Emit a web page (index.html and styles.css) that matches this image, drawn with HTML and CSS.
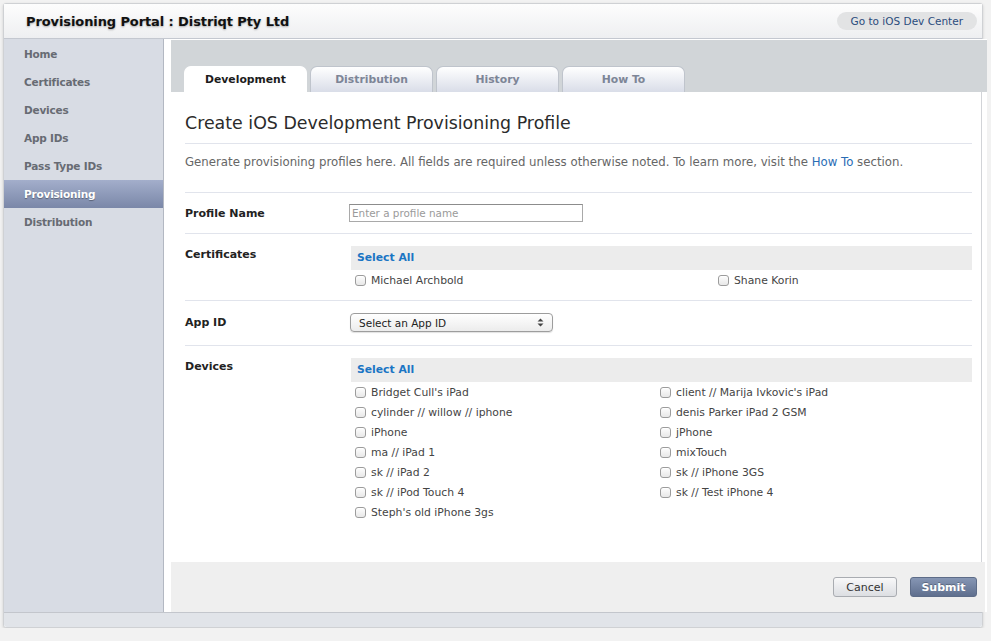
FILE: index.html
```html
<!DOCTYPE html>
<html>
<head>
<meta charset="utf-8">
<title>Provisioning Portal</title>
<link rel="stylesheet" href="styles.css">
</head>
<body>
<div class="frame">
  <header class="topbar">
    <h1 class="title">Provisioning Portal : Distriqt Pty Ltd</h1>
    <a class="devcenter" href="#">Go to iOS Dev Center</a>
  </header>
  <div class="body">
    <nav class="sidebar">
      <a class="nav-item" href="#">Home</a>
      <a class="nav-item" href="#">Certificates</a>
      <a class="nav-item" href="#">Devices</a>
      <a class="nav-item" href="#">App IDs</a>
      <a class="nav-item" href="#">Pass Type IDs</a>
      <a class="nav-item active" href="#">Provisioning</a>
      <a class="nav-item" href="#">Distribution</a>
    </nav>
    <main class="main">
      <div class="tabband">
        <a class="tab active" href="#">Development</a>
        <a class="tab" href="#">Distribution</a>
        <a class="tab" href="#">History</a>
        <a class="tab" href="#">How To</a>
      </div>
      <section class="content">
        <h2 class="heading">Create iOS Development Provisioning Profile</h2>
        <p class="intro">Generate provisioning profiles here. All fields are required unless otherwise noted. To learn more, visit the <a href="#" class="link">How To</a> section.</p>

        <div class="row row-name">
          <div class="label">Profile Name</div>
          <div class="field"><input class="text-input" type="text" placeholder="Enter a profile name"></div>
        </div>

        <div class="row row-certs">
          <div class="label">Certificates</div>
          <div class="field">
            <div class="selectall">Select All</div>
            <div class="checks certs">
              <label class="check"><span class="cb"></span>Michael Archbold</label>
              <label class="check"><span class="cb"></span>Shane Korin</label>
            </div>
          </div>
        </div>

        <div class="row row-app">
          <div class="label">App ID</div>
          <div class="field">
            <div class="select">
              <span>Select an App ID</span>
              <svg class="updown" width="7" height="9" viewBox="0 0 7 9"><path d="M3.5 0.5 L6.5 3.5 H0.5 Z M3.5 8.5 L6.5 5.5 H0.5 Z" fill="#444"/></svg>
            </div>
          </div>
        </div>

        <div class="row row-devices">
          <div class="label">Devices</div>
          <div class="field">
            <div class="selectall">Select All</div>
            <div class="checks devices">
              <label class="check"><span class="cb"></span>Bridget Cull's iPad</label>
              <label class="check"><span class="cb"></span>client // Marija Ivkovic's iPad</label>
              <label class="check"><span class="cb"></span>cylinder // willow // iphone</label>
              <label class="check"><span class="cb"></span>denis Parker iPad 2 GSM</label>
              <label class="check"><span class="cb"></span>iPhone</label>
              <label class="check"><span class="cb"></span>jPhone</label>
              <label class="check"><span class="cb"></span>ma // iPad 1</label>
              <label class="check"><span class="cb"></span>mixTouch</label>
              <label class="check"><span class="cb"></span>sk // iPad 2</label>
              <label class="check"><span class="cb"></span>sk // iPhone 3GS</label>
              <label class="check"><span class="cb"></span>sk // iPod Touch 4</label>
              <label class="check"><span class="cb"></span>sk // Test iPhone 4</label>
              <label class="check"><span class="cb"></span>Steph's old iPhone 3gs</label>
            </div>
          </div>
        </div>
      </section>
      <footer class="actions">
        <button class="btn cancel" type="button">Cancel</button>
        <button class="btn submit" type="button">Submit</button>
      </footer>
    </main>
  </div>
  <div class="bottombar"></div>
</div>
</body>
</html>
```

FILE: styles.css
```css
* { box-sizing: border-box; }

html, body {
  margin: 0;
  padding: 0;
  background: #f2f2f2;
  font-family: "DejaVu Sans", "Liberation Sans", sans-serif;
  font-size: 12px;
  color: #333;
}

.frame {
  margin: 3px 0 0 3px;
  width: 980px;
  border: 1px solid #cfd1d4;
  border-radius: 3px;
  box-shadow: 0 1px 3px rgba(0,0,0,0.15);
  background: #fff;
}

.topbar {
  height: 35px;
  display: flex;
  align-items: center;
  justify-content: space-between;
  padding: 0 5px 0 22px;
  background: linear-gradient(#fdfdfd, #eeeff1);
  border-bottom: 1px solid #c4c8d0;
}

.title {
  margin: 0;
  font-size: 13px;
  font-weight: bold;
  color: #111;
  letter-spacing: -0.1px;
  text-shadow: 0 1px 2px rgba(0,0,0,0.3);
}

.devcenter {
  display: block;
  height: 18px;
  line-height: 18px;
  padding: 0 14px;
  border-radius: 9px;
  background: #e2e3e4;
  color: #2b4c7c;
  font-size: 10.5px;
  text-decoration: none;
}

.body {
  display: flex;
}

.sidebar {
  width: 160px;
  flex: none;
  background: #d8dce4;
  border-right: 1px solid #b3b8c2;
  padding-top: 1px;
}

.nav-item {
  display: block;
  height: 28px;
  line-height: 28px;
  padding-left: 20px;
  font-size: 10.5px;
  letter-spacing: -0.2px;
  font-weight: bold;
  color: #676b73;
  text-decoration: none;
}

.nav-item.active {
  background: linear-gradient(#a3aecb, #7a87a8);
  color: #fff;
  text-shadow: 0 1px 1px rgba(0,0,0,0.35);
}

.main {
  flex: 1;
  min-width: 0;
  margin-right: -5px;
  background: #fff;
  padding: 1px 0 0 7px;
  display: flex;
  flex-direction: column;
}

.tabband {
  height: 52px;
  background: #d1d5d8;
  display: flex;
  align-items: flex-end;
  gap: 3px;
  padding-left: 13px;
}

.tab {
  width: 123px;
  height: 26px;
  line-height: 26px;
  text-align: center;
  font-size: 10.8px;
  font-weight: bold;
  color: #7d8597;
  text-decoration: none;
  border: 1px solid #bfc4cc;
  border-bottom: none;
  border-radius: 7px 7px 0 0;
  background: linear-gradient(#ffffff, #d9dde8);
}

.tab.active {
  background: #fff;
  border-color: #fff;
  color: #1c1c1c;
}

.content {
  margin-right: 5px;
  border-right: 1px solid #d2d4d8;
  padding: 0 9px 40px 14px;
}

.heading {
  margin: 0;
  padding: 20px 0 9px;
  line-height: 22px;
  font-size: 17.4px;
  font-weight: normal;
  color: #2b2b2b;
  border-bottom: 1px solid #e1e4ec;
}

.intro {
  margin: 0;
  padding: 9px 0 21px;
  line-height: 18px;
  font-size: 11.75px;
  color: #666;
  border-bottom: 1px solid #e1e4ec;
}

.link {
  color: #2a6db5;
  text-decoration: none;
}

.row {
  display: flex;
  border-bottom: 1px solid #e1e4ec;
}

.label {
  width: 165px;
  flex: none;
  font-size: 11px;
  font-weight: bold;
  color: #222;
  line-height: 16px;
  padding-top: 1px;
}

.field {
  flex: 1;
}

.row-name { padding: 11px 0 11px; }
.row-name .label { padding-top: 2px; }
.row-certs { padding: 12px 0 10px; }
.row-app { padding: 12px 0 13px; }
.row-app .label { padding-top: 2px; }
.row-devices { padding: 12px 0 0; border-bottom: none; }

.text-input {
  display: block;
  width: 234px;
  height: 18px;
  margin: 0 0 0 -1px;
  padding: 0 2px;
  border: 1px solid #a9a9a9;
  border-top-color: #8c8c8c;
  font-family: inherit;
  font-size: 10.4px;
  color: #333;
  outline: none;
}

.text-input::placeholder {
  color: #9a9a9a;
}

.selectall {
  height: 24px;
  line-height: 24px;
  margin-left: 1px;
  padding-left: 6px;
  background: #ececec;
  color: #1b75c4;
  font-size: 10.8px;
  font-weight: bold;
}

.checks {
  display: grid;
  margin-left: 5px;
}

.checks.certs { grid-template-columns: 363px 1fr; }
.checks.devices { grid-template-columns: 305px 1fr; }

.check {
  display: flex;
  align-items: center;
  height: 20px;
  font-size: 10.8px;
  color: #444;
}

.cb {
  display: inline-block;
  width: 11px;
  height: 11px;
  margin-right: 5px;
  border: 1px solid #9c9c9c;
  border-radius: 3px;
  background: linear-gradient(#fdfdfd, #e8e8e8);
  box-shadow: inset 0 1px 0 #fff;
}

.select {
  width: 203px;
  height: 19px;
  display: flex;
  align-items: center;
  justify-content: space-between;
  padding: 0 8px 0 8px;
  border: 1px solid #9d9d9d;
  border-radius: 4px;
  background: linear-gradient(#ffffff, #ececec);
  box-shadow: 0 1px 1px rgba(0,0,0,0.12);
  font-size: 10.5px;
  color: #222;
}

.updown { display: block; }

.actions {
  height: 50px;
  background: #efefef;
  display: flex;
  justify-content: flex-end;
  align-items: center;
  gap: 13px;
  padding-right: 8px;
  margin-right: 2px;
}

.btn {
  height: 20px;
  padding: 0;
  border-radius: 3px;
  font-family: "DejaVu Sans", sans-serif;
  font-size: 11px;
}

.btn.cancel {
  width: 64px;
  border: 1px solid #a9acb1;
  background: linear-gradient(#f8f8f9, #dcdee2);
  color: #333;
}

.btn.submit {
  width: 67px;
  border: 1px solid #5d6c88;
  background: linear-gradient(#8696b4, #5f6f8e);
  color: #fff;
  font-weight: bold;
  text-shadow: 0 -1px 0 rgba(0,0,0,0.25);
}

.bottombar {
  height: 15px;
  background: #e1e4e9;
  border-top: 1px solid #c3c6cc;
  border-radius: 0 0 3px 3px;
}
```
